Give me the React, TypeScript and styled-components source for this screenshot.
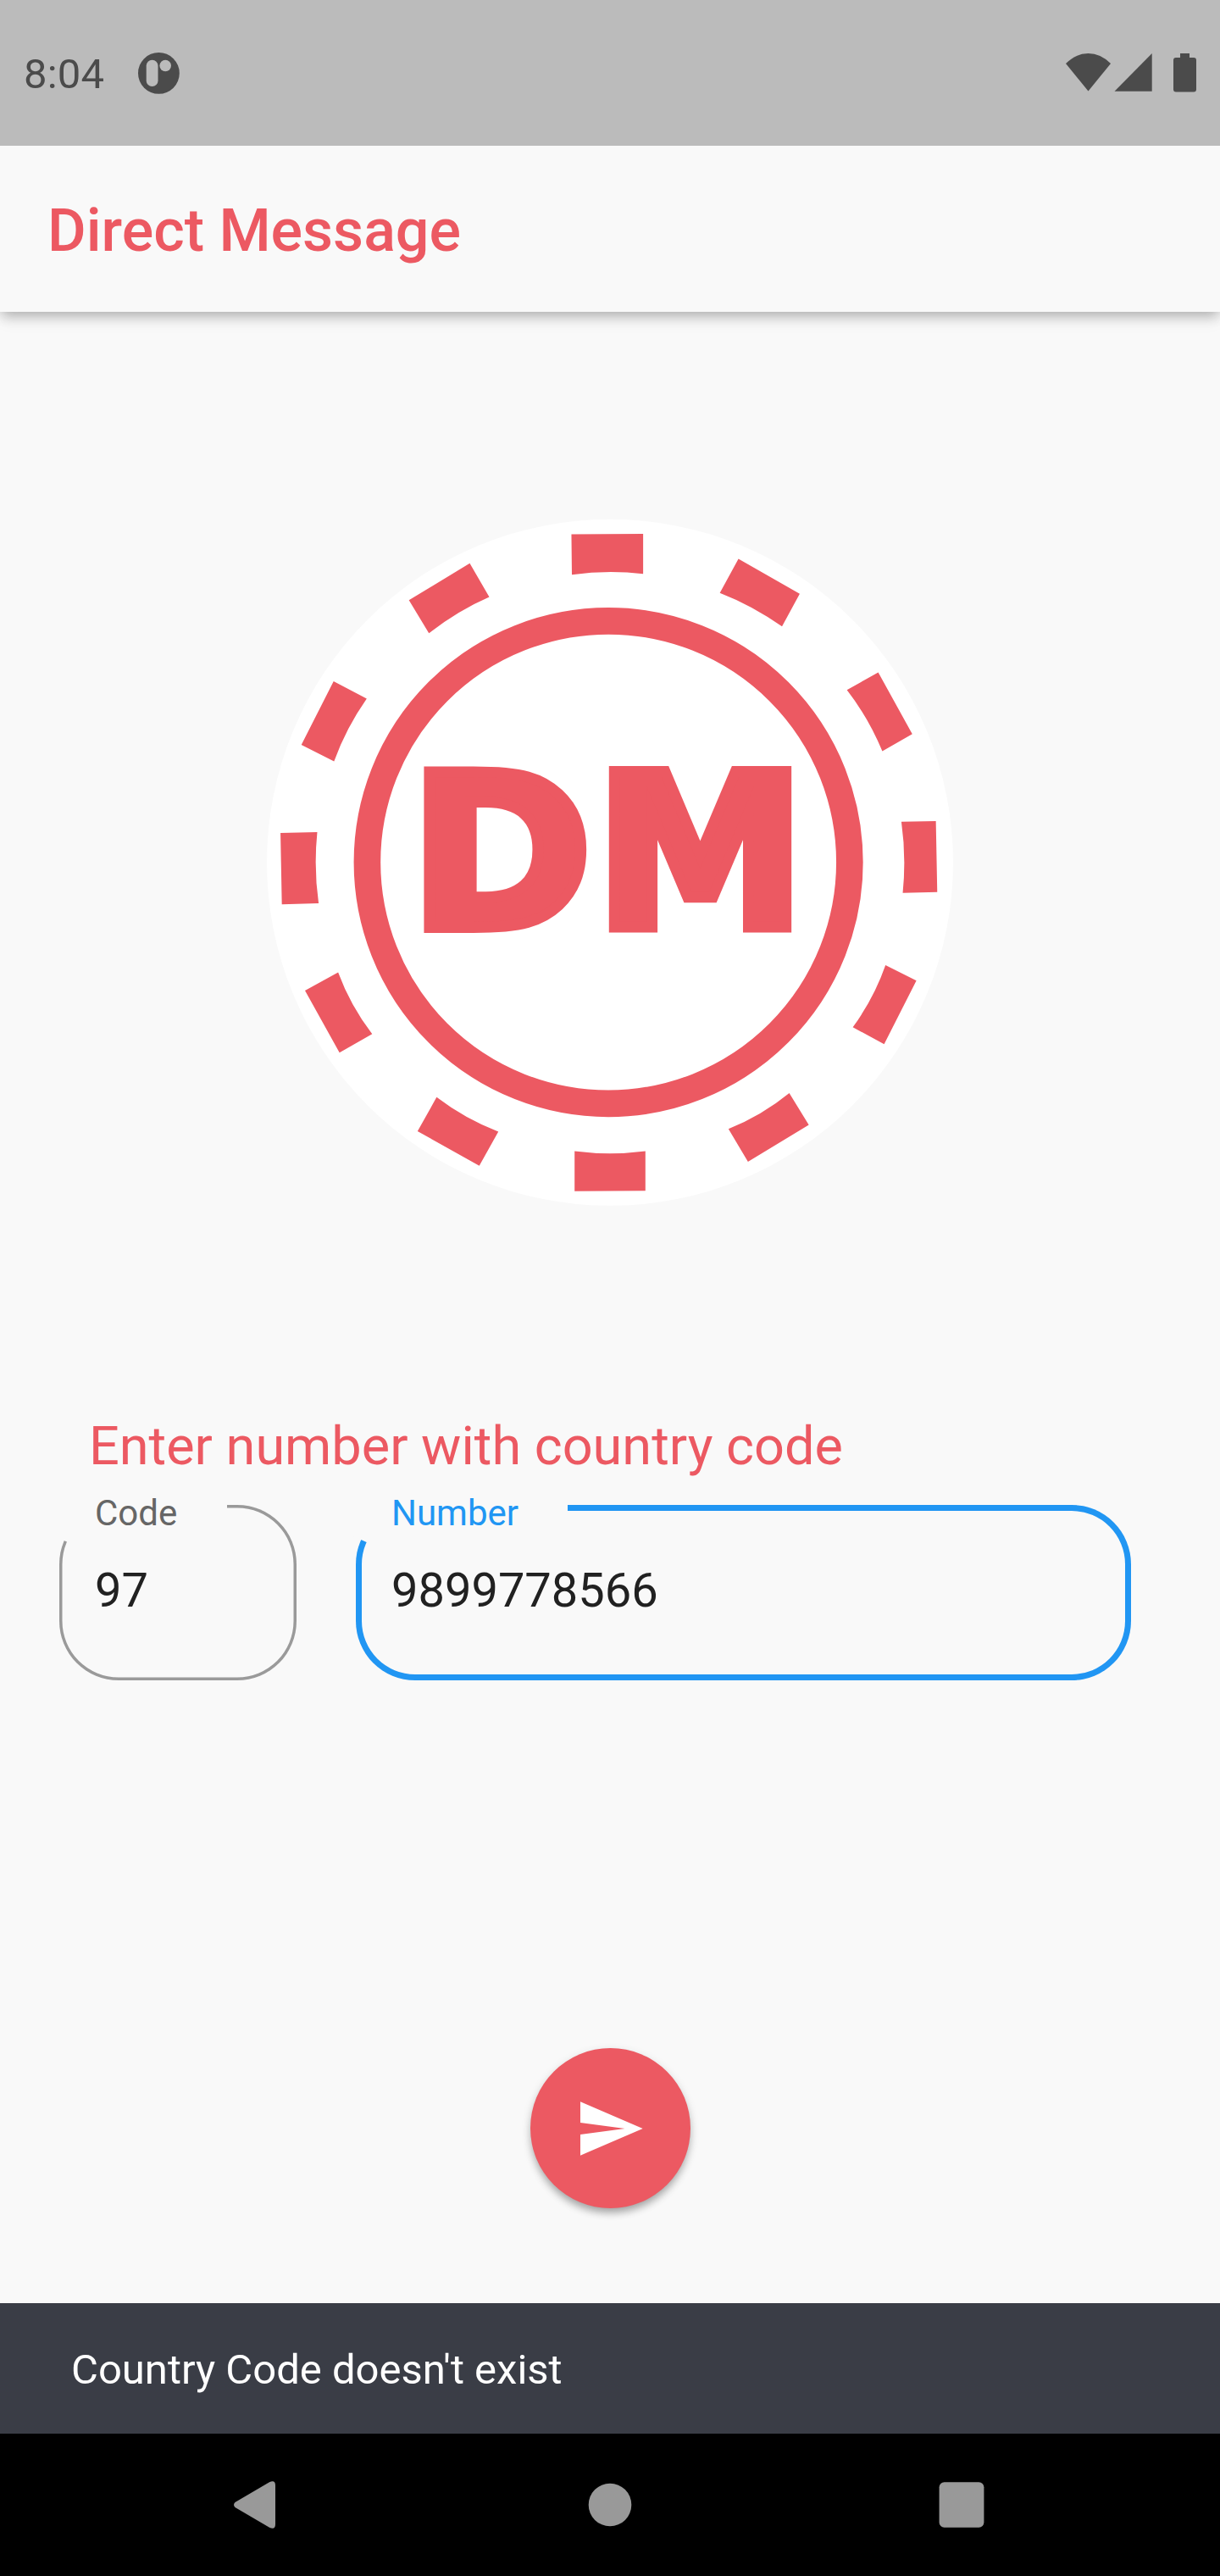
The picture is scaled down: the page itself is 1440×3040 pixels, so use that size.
import React from "react";
import styled, { createGlobalStyle } from "styled-components";

const coral = "#ec5962";
const paper = "#f9f9f9";
const blue = "#2196f3";

const GlobalStyle = createGlobalStyle`
  * { box-sizing: border-box; }
  html, body { margin: 0; padding: 0; background: ${paper}; }
  body { font-family: Roboto, "Noto Sans", sans-serif; }
`;

const Screen = styled.div`
  width: 1440px;
  height: 3040px;
  display: flex;
  flex-direction: column;
  background: ${paper};
  overflow: hidden;
`;

const StatusBar = styled.header`
  position: relative;
  z-index: 1;
  height: 172px;
  flex: none;
  display: flex;
  align-items: flex-start;
  justify-content: space-between;
  padding: 62px 28px 0;
  background: #bbbbbb;
  color: #4b4b4b;
`;

const StatusGroup = styled.div`
  display: flex;
  align-items: flex-start;
`;

const Clock = styled.span`
  width: 135px;
  margin-top: -3px;
  font-size: 49px;
  line-height: 58px;
  letter-spacing: 0.2px;
`;

const AppBar = styled.div`
  position: relative;
  height: 196px;
  flex: none;
  display: flex;
  align-items: center;
  padding: 4px 56px 0;
  background: ${paper};
  box-shadow: 0 7px 14px -3px rgba(0, 0, 0, 0.2), 0 14px 17px rgba(0, 0, 0, 0.035),
    0 3px 17px rgba(0, 0, 0, 0.12);
`;

const Title = styled.h1`
  margin: 0;
  color: ${coral};
  font-size: 70px;
  font-weight: 500;
  line-height: 82px;
`;

const Content = styled.main`
  flex: 1;
  display: flex;
  flex-direction: column;
  padding-top: 232px;
`;

const LogoFrame = styled.div`
  align-self: center;
  width: 840px;
  height: 840px;
  svg { display: block; }
`;

const Prompt = styled.p`
  margin: 230px 0 0;
  padding-left: 105px;
  color: ${coral};
  font-size: 63px;
  line-height: 74px;
`;

const Fields = styled.div`
  display: flex;
  gap: 70px;
  margin-top: 32px;
  padding-left: 70px;
`;

const Field = styled.label<{ $width: number; $active?: boolean; $notch: number }>`
  position: relative;
  width: ${(p) => p.$width}px;
  height: 207px;
  display: flex;
  align-items: center;
  padding: 0 0 6px 42px;
  color: ${(p) => (p.$active ? blue : "#666666")};

  &::before {
    content: "";
    position: absolute;
    inset: 0;
    box-shadow: inset 0 0 0 ${(p) => (p.$active ? `7px ${blue}` : "3.5px #9a9a9a")};
    border-radius: 70px;
  }

  &::after {
    content: "";
    position: absolute;
    left: -5px;
    top: -5px;
    width: ${(p) => p.$notch + 5}px;
    height: 75px;
    background: ${paper};
    clip-path: polygon(0 0, 100% 0, 100% 100%, 75px 100%, 0 ${(p) => (p.$active ? 41 : 42.4)}px);
  }
`;

const FieldLabel = styled.span`
  position: absolute;
  z-index: 1;
  left: 42px;
  top: -15px;
  font-size: 42px;
  line-height: 50px;
`;

const FieldValue = styled.span`
  position: relative;
  z-index: 1;
  color: #212121;
  font-size: 56px;
  line-height: 66px;
`;

const SendButton = styled.button`
  align-self: center;
  width: 189px;
  height: 189px;
  margin-top: 434px;
  padding: 0 0 0 4px;
  display: flex;
  align-items: center;
  justify-content: center;
  border: 0;
  border-radius: 50%;
  background: ${coral};
  box-shadow: 0 7px 10px -2px rgba(0, 0, 0, 0.26), 0 4px 12px rgba(0, 0, 0, 0.14);
`;

const Snackbar = styled.div`
  height: 154px;
  flex: none;
  display: flex;
  align-items: center;
  padding: 4px 84px 0;
  background: #3a3d46;
  color: #ffffff;
  font-size: 49px;
  line-height: 58px;
`;

const NavBar = styled.nav`
  height: 168px;
  flex: none;
  display: grid;
  grid-template-columns: 601px 238px 592px;
  align-items: center;
  justify-items: center;
  background: #000000;
`;

const marks = [
  "M699 57L857 56V144Q778 135 700 146Z",
  "M1067 111L1202 188L1163 260Q1098 214 1026 186Z",
  "M1375 361L1450 497L1384 535Q1354 462 1306 400Z",
  "M1502 689L1505 845L1429 847Q1437 768 1426 690Z",
  "M1391 1006L1459 1040L1388 1180L1319 1143Q1366 1078 1391 1006Z",
  "M1179 1288L1222 1358L1088 1439L1045 1367Q1119 1337 1179 1288Z",
  "M706 1416Q784 1426 862 1416V1503L706 1504Z",
  "M402 1297Q465 1345 538 1373L496 1448L360 1372Z",
  "M185 1022Q212 1095 260 1158L188 1199L112 1062Z",
  "M139 713Q131 792 142 870L61 872L58 715Z",
  "M175 381L248 419Q203 483 176 557L104 521Z",
  "M475 121L518 195Q449 225 385 275L341 202Z",
];

const Monogram = styled.g`
  font-family: "DejaVu Sans", sans-serif;
  font-size: 470px;
  font-weight: 700;
  stroke: ${coral};
  stroke-width: 24px;
  stroke-linejoin: miter;
  stroke-miterlimit: 10;
`;

const Logo = () => (
  <svg width="840" height="840" viewBox="0 0 1568 1568" fill={coral}>
    <circle cx="784" cy="780" r="756" fill="#ffffff" />
    {marks.map((d) => (
      <path key={d} d={d} />
    ))}
    <circle cx="780.5" cy="779.5" r="531.5" fill="none" stroke={coral} strokeWidth="59" />
    <Monogram>
      <text x="342" y="923" textLength="403" lengthAdjust="spacingAndGlyphs">D</text>
      <text x="751" y="923" textLength="464" lengthAdjust="spacingAndGlyphs">M</text>
    </Monogram>
  </svg>
);

const NotificationIcon = () => (
  <svg width="50" height="50" viewBox="0 0 50 50">
    <circle cx="24.4" cy="24.4" r="24.4" fill="currentColor" />
    <rect x="9.7" y="8.7" width="13.8" height="31.4" rx="6.9" fill="#bbbbbb" />
    <circle cx="32.2" cy="15.5" r="6.8" fill="#bbbbbb" />
  </svg>
);

const SystemIcons = () => (
  <svg width="154" height="48" viewBox="0 0 154 48" fill="currentColor">
    <path d="M0 13Q12 1 26.5 1T53 13L26.5 45.5Z" />
    <path d="M101.7 1V45.7H57.5Z" />
    <path d="M135 1H146V6H151Q154 6 154 9V43.5Q154 46.5 151 46.5H130Q127 46.5 127 43.5V9Q127 6 130 6H135Z" />
  </svg>
);

const SendIcon = () => (
  <svg width="74" height="64" viewBox="0 0 74 64">
    <path d="M0 0.3L73.7 32L0 63.7V39L52.5 32L0 25Z" fill="#ffffff" />
  </svg>
);

const BackIcon = () => (
  <svg width="49" height="56" viewBox="0 0 49 56" fill="#999999">
    <path d="M1.5 25L42 1.2Q49 -2 49 5V51Q49 58 42 54.8L1.5 31Q-1.5 28 1.5 25Z" />
  </svg>
);

const HomeIcon = () => (
  <svg width="52" height="52" viewBox="0 0 52 52" fill="#999999">
    <circle cx="26" cy="26" r="25.3" />
  </svg>
);

const RecentsIcon = () => (
  <svg width="54" height="54" viewBox="0 0 54 54" fill="#999999">
    <rect x="0.6" y="0.3" width="52.8" height="53.4" rx="6" />
  </svg>
);

export default function App() {
  return (
    <>
      <GlobalStyle />
      <Screen>
        <StatusBar>
          <StatusGroup>
            <Clock>8:04</Clock>
            <NotificationIcon />
          </StatusGroup>
          <SystemIcons />
        </StatusBar>
        <AppBar>
          <Title>Direct Message</Title>
        </AppBar>
        <Content>
          <LogoFrame>
            <Logo />
          </LogoFrame>
          <Prompt>Enter number with country code</Prompt>
          <Fields>
            <Field $width={280} $notch={198}>
              <FieldLabel>Code</FieldLabel>
              <FieldValue>97</FieldValue>
            </Field>
            <Field $width={915} $notch={250} $active>
              <FieldLabel>Number</FieldLabel>
              <FieldValue>9899778566</FieldValue>
            </Field>
          </Fields>
          <SendButton aria-label="Send">
            <SendIcon />
          </SendButton>
        </Content>
        <Snackbar>Country Code doesn't exist</Snackbar>
        <NavBar>
          <BackIcon />
          <HomeIcon />
          <RecentsIcon />
        </NavBar>
      </Screen>
    </>
  );
}
